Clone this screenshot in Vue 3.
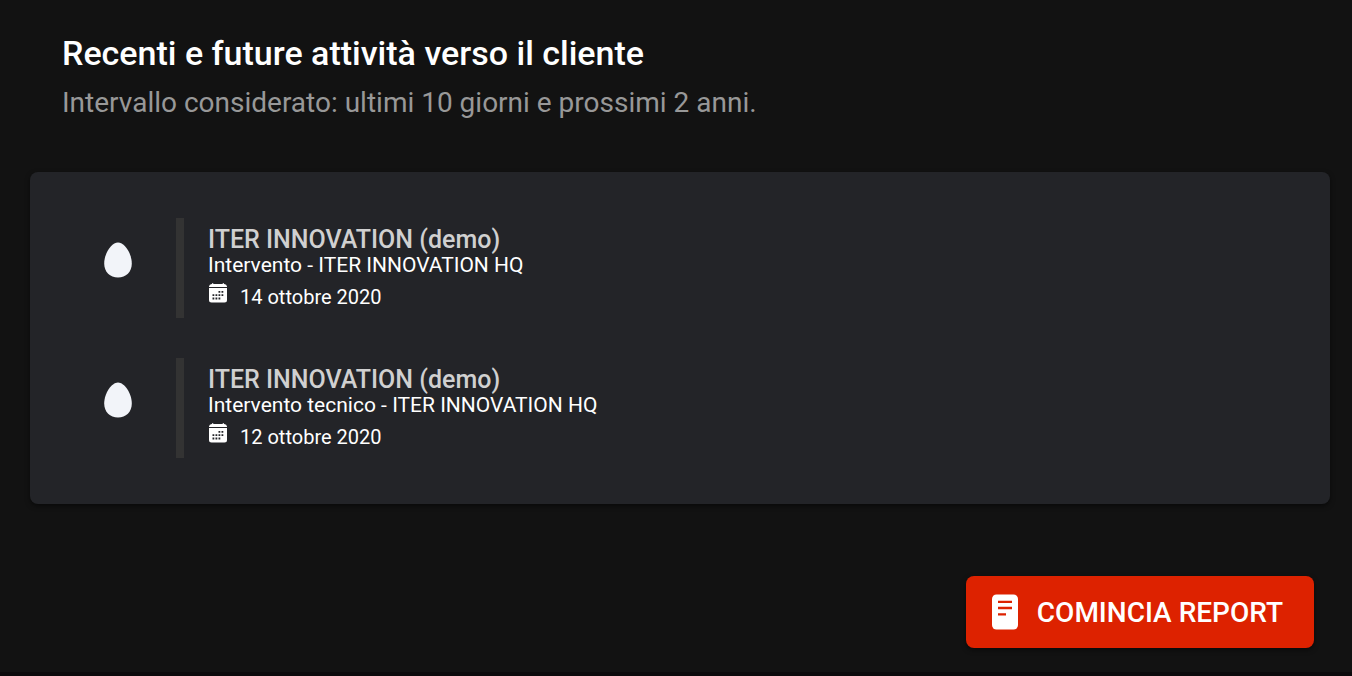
<script setup>
const activities = [
  { id: 1, customer: 'ITER INNOVATION (demo)', detail: 'Intervento - ITER INNOVATION HQ', iso: '2020-10-14', date: '14 ottobre 2020' },
  { id: 2, customer: 'ITER INNOVATION (demo)', detail: 'Intervento tecnico - ITER INNOVATION HQ', iso: '2020-10-12', date: '12 ottobre 2020' },
]
</script>

<template>
  <main class="page">
    <header class="heading">
      <h1>Recenti e future attività verso il cliente</h1>
      <p>Intervallo considerato: ultimi 10 giorni e prossimi 2 anni.</p>
    </header>

    <ul class="card">
      <li v-for="item in activities" :key="item.id" class="activity">
        <div class="marker">
          <svg class="egg" viewBox="0 0 28 36" aria-hidden="true">
            <path d="M14 .5C20.500.5 27.800 11.500 27.800 21.500C27.800 30 22 35.500 14 35.500S.2 30 .2 21.500C.2 11.500 7.500.5 14 .5Z" fill="#f2f4f9" />
          </svg>
        </div>
        <div class="body">
          <h2>{{ item.customer }}</h2>
          <p class="detail">{{ item.detail }}</p>
          <p class="when">
            <svg class="calendar" viewBox="0 0 20 20" aria-hidden="true">
              <path d="M4 .3h1.300V1h9.400V.3H16V1h.2A2.800 2.800 0 0 1 19 3.500V4H1v-.5A2.800 2.800 0 0 1 3.800 1H4Z" fill="#fff" />
              <path d="M1 5h18v12a2.500 2.500 0 0 1-2.500 2.500h-13A2.500 2.500 0 0 1 1 17Z" fill="#fff" />
              <path d="M10.500 8h1.800v1.800h-1.800zM13.500 8h1.800v1.800h-1.800zM4.500 11.300h1.800v1.800H4.500zM7.500 11.300h1.800v1.800H7.500zM10.500 11.300h1.800v1.800h-1.800zM13.500 11.300h1.800v1.800h-1.800zM4.500 14.600h1.800v1.800H4.500zM7.500 14.600h1.800v1.800H7.500zM10.500 14.600h1.800v1.800h-1.800z" fill="#232428" />
            </svg>
            <time :datetime="item.iso">{{ item.date }}</time>
          </p>
        </div>
      </li>
    </ul>

    <div class="actions">
      <button type="button" class="report">
        <svg class="document" viewBox="0 0 28 36" aria-hidden="true">
          <rect x="1" y=".5" width="26" height="35" rx="4.500" fill="#fff" />
          <path d="M7 7.800h14M7 14h14M7 20.300h8" stroke="#dd2200" stroke-width="2.300" />
        </svg>
        <span>COMINCIA REPORT</span>
      </button>
    </div>
  </main>
</template>

<style>
html {
  background: #121212;
}
body {
  margin: 0;
}
</style>

<style scoped>
.page {
  box-sizing: border-box;
  min-height: 100vh;
  padding: 33px 22px 24px 30px;
  border-bottom: 4px solid #0c0a0c;
  background: #121212;
  color: #fff;
  font-family: Roboto, sans-serif;
}
.heading {
  padding: 0 32px;
}
h1,
h2,
p {
  margin: 0;
}
h1 {
  font-size: 34px;
  font-weight: 500;
  line-height: 40px;
}
.heading p {
  margin-top: 12px;
  color: #989898;
  font-size: 28px;
  line-height: 36px;
}
.card {
  margin: 51px 0 0;
  padding: 46px 32px;
  border-radius: 8px;
  background: #232428;
  box-shadow: 0 2px 5px rgba(0, 0, 0, 0.5);
  list-style: none;
}
.activity {
  display: flex;
  gap: 2px;
  min-height: 100px;
}
.activity + .activity {
  margin-top: 40px;
}
.marker {
  display: flex;
  justify-content: center;
  width: 112px;
  padding-top: 24px;
}
.egg {
  width: 28px;
  height: 36px;
}
.body {
  flex: 1;
  padding: 9px 0 0 24px;
  border-left: 8px solid #333;
}
h2 {
  color: #d0d0d0;
  font-size: 25px;
  font-weight: 500;
  line-height: 26px;
}
.detail {
  font-size: 21px;
  line-height: 24px;
}
.when {
  display: flex;
  gap: 12px;
  margin-top: 6px;
  font-size: 20px;
  line-height: 28px;
}
.calendar {
  width: 20px;
  height: 20px;
}
.actions {
  display: flex;
  justify-content: flex-end;
  margin-top: 72px;
  padding-right: 16px;
}
.report {
  display: flex;
  align-items: center;
  gap: 18px;
  min-height: 72px;
  padding: 0 31px 0 25px;
  border: 0;
  border-radius: 8px;
  background: #dd2200;
  box-shadow: 0 2px 5px rgba(0, 0, 0, 0.5);
  color: #fff;
  font-family: inherit;
  font-size: 28px;
  font-weight: 500;
  line-height: 36px;
}
.report span {
  padding-top: 2px;
}
.document {
  width: 28px;
  height: 36px;
}
</style>
